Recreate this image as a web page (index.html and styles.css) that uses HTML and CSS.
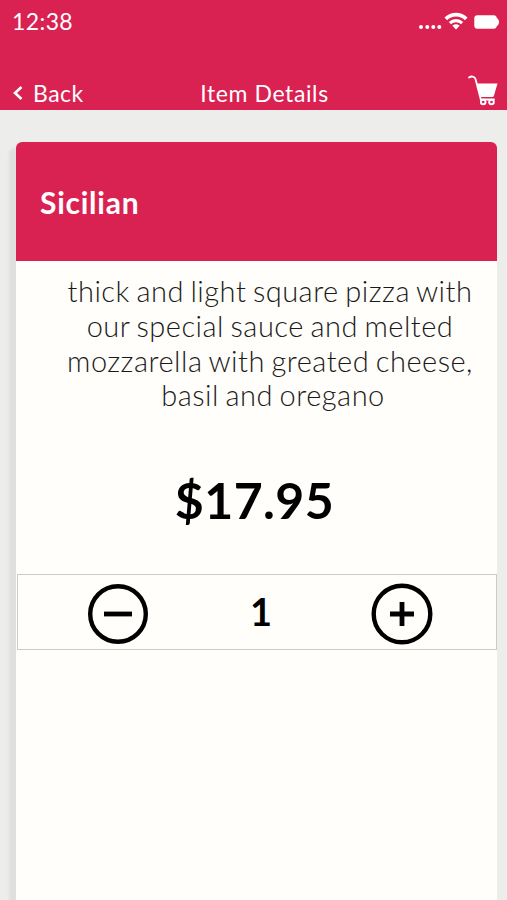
FILE: index.html
```html
<!DOCTYPE html>
<html lang="en">
  <head>
    <meta charset="UTF-8" />
    <meta name="viewport" content="width=device-width, initial-scale=1.0" />
    <title>Item Details</title>
    <link rel="stylesheet" href="styles.css">
  </head>
  <body>
    <header class="header">
      <!-- STATUS BAR -->
      <div class="status">
        <span class="time">12:38</span>
        <div class="status-icons">
          <svg width="24" height="6" viewBox="0 0 24 6" fill="#fff">
            <circle cx="3" cy="3" r="2" /><circle cx="9.3" cy="3" r="2" />
            <circle cx="15.3" cy="3" r="2" /><circle cx="21.3" cy="3" r="2" />
          </svg>
          <svg class="wifi" width="24" height="18" viewBox="0 0 24 18">
            <g fill="none" stroke="#fff" stroke-width="3.8">
              <path d="M1.8 6.8a14.5 14.5 0 0 1 20.4 0" />
              <path d="M5.9 11.2a8.7 8.7 0 0 1 12.2 0" stroke-width="3.2" />
            </g>
            <path d="M12 17.5l-3.6-3.7a5.2 5.2 0 0 1 7.2 0z" fill="#fff" />
          </svg>
          <svg class="battery" width="26" height="14" viewBox="0 0 26 14" fill="#fff">
            <rect x="0.3" y="0.3" width="22.4" height="13.4" rx="3" />
            <path d="M22 2.5c2 1 3 2.5 3 4.5s-1 3.5-3 4.5z" />
          </svg>
        </div>
      </div>

      <!-- NAV BAR -->
      <nav class="nav">
        <a class="back">
          <svg class="chevron" width="10" height="16" viewBox="0 0 10 16" fill="none" stroke="#fff" stroke-width="2.6">
            <path d="M8.5 2L2 8l6.5 6" />
          </svg>
          Back
        </a>
        <h1 class="title">Item Details</h1>
        <svg class="cart" width="32" height="32" viewBox="0 0 32 32">
          <path d="M2 3.5C4 2 7.5 2 8.5 5l5.3 20.5H27" fill="none" stroke="#fff" stroke-width="1.8" stroke-linecap="round" />
          <path d="M9.5 9.5H30.5L27 21.5q-.4 1.5-2 1.5H13.3z" fill="#fff" />
          <g fill="none" stroke="#fff" stroke-width="1.9">
            <circle cx="16.2" cy="28" r="2.3" />
            <circle cx="24.5" cy="28" r="2.3" />
          </g>
        </svg>
      </nav>
    </header>

    <main class="card">
      <h2 class="name">Sicilian</h2>
      <p class="description">
        <span class="line">thick and light square pizza with</span>
        <span class="line">our special sauce and melted</span>
        <span class="line">mozzarella with greated cheese,</span>
        <span class="line">basil and oregano</span>
      </p>
      <div class="price">$17.95</div>

      <!-- QUANTITY -->
      <div class="quantity">
        <button class="step" aria-label="Remove one">
          <svg width="60" height="60" viewBox="0 0 60 60" fill="none" stroke="#000">
            <circle cx="30" cy="30" r="27.8" stroke-width="4.4" />
            <path d="M16 30h28" stroke-width="4.8" />
          </svg>
        </button>
        <span class="count">1</span>
        <button class="step" aria-label="Add one">
          <svg width="62" height="62" viewBox="0 0 62 62" fill="none" stroke="#000">
            <circle cx="31" cy="31" r="28.3" stroke-width="4.4" />
            <path d="M19 31h24M31 19v24" stroke-width="4.8" />
          </svg>
        </button>
      </div>
    </main>
  </body>
</html>
```

FILE: styles.css
```css
:root {
  --bg: #edeeec;
  --panel: #fffefa;
  --primary: #d92252;
}

* {
  box-sizing: border-box;
}

body {
  background: var(--bg);
  font-family: "Lato", sans-serif;
  margin: 0;
  height: 900px;
  display: flex;
  flex-direction: column;
  overflow: hidden;
}

/* ───── HEADER ───── */
.header {
  background: var(--primary);
  color: #fff;
  height: 110px;
  display: flex;
  flex-direction: column;
  justify-content: space-between;
}

.status {
  display: flex;
  justify-content: space-between;
  padding: 7px 7px 0 12px;
}

.time {
  font-size: 23px;
  line-height: 28px;
  letter-spacing: 0.4px;
}

.status-icons {
  display: flex;
  align-items: flex-end;
  height: 23px;
}

.wifi    { margin-left: 2px; }
.battery { margin: 0 0 1px 6px; }

.nav {
  display: grid;
  grid-template-columns: 1fr auto 1fr;
  align-items: center;
  height: 36px;
  padding: 0 8px 0 13px;
  font-size: 23px;
}

.back {
  display: flex;
  align-items: center;
  gap: 10px;
  letter-spacing: 0.5px;
}

.chevron { margin-top: 1px; }

.title {
  margin: 0 0 0 17px;
  font-size: 23px;
  font-weight: 400;
  letter-spacing: 0.6px;
}

.cart {
  justify-self: end;
  margin-bottom: 5px;
}

/* ───── CARD ───── */
.card {
  flex: 1;
  margin: 32px 10px 0 16px;
  background: var(--panel);
  border-radius: 6px 6px 0 0;
  box-shadow: -7px 6px 3px rgba(0, 0, 0, 0.06);
}

.name {
  margin: 0;
  height: 119px;
  padding: 1px 24px 0;
  display: flex;
  align-items: center;
  background: var(--primary);
  border-radius: 6px 6px 0 0;
  color: #fff;
  font-size: 30px;
  font-weight: 700;
  letter-spacing: 0.75px;
}

.description {
  margin: 0;
  padding: 13px 0 0 33px;
  color: #1a1a1a;
  font-size: 29px;
  font-weight: 300;
  line-height: 34.8px;
  letter-spacing: 0.5px;
  word-spacing: -1.8px;
  text-align: center;
}

.line {
  display: block;
  padding-right: 6px;
}

.line:last-child { padding-right: 0; }

.price {
  margin-top: 57px;
  padding-right: 4px;
  font-size: 50px;
  font-weight: 700;
  line-height: 60px;
  letter-spacing: 0.4px;
  text-align: center;
}

/* ───── QUANTITY ───── */
.quantity {
  display: flex;
  align-items: center;
  justify-content: space-between;
  height: 76px;
  margin: 44px 0 0 1px;
  padding: 4px 63px 0 70px;
  border: 1px solid #cbccca;
}

.step {
  display: flex;
  padding: 0;
  border: none;
  background: none;
}

.count {
  margin: 0 0 6px 3px;
  font-size: 38px;
  font-weight: 700;
}
```
